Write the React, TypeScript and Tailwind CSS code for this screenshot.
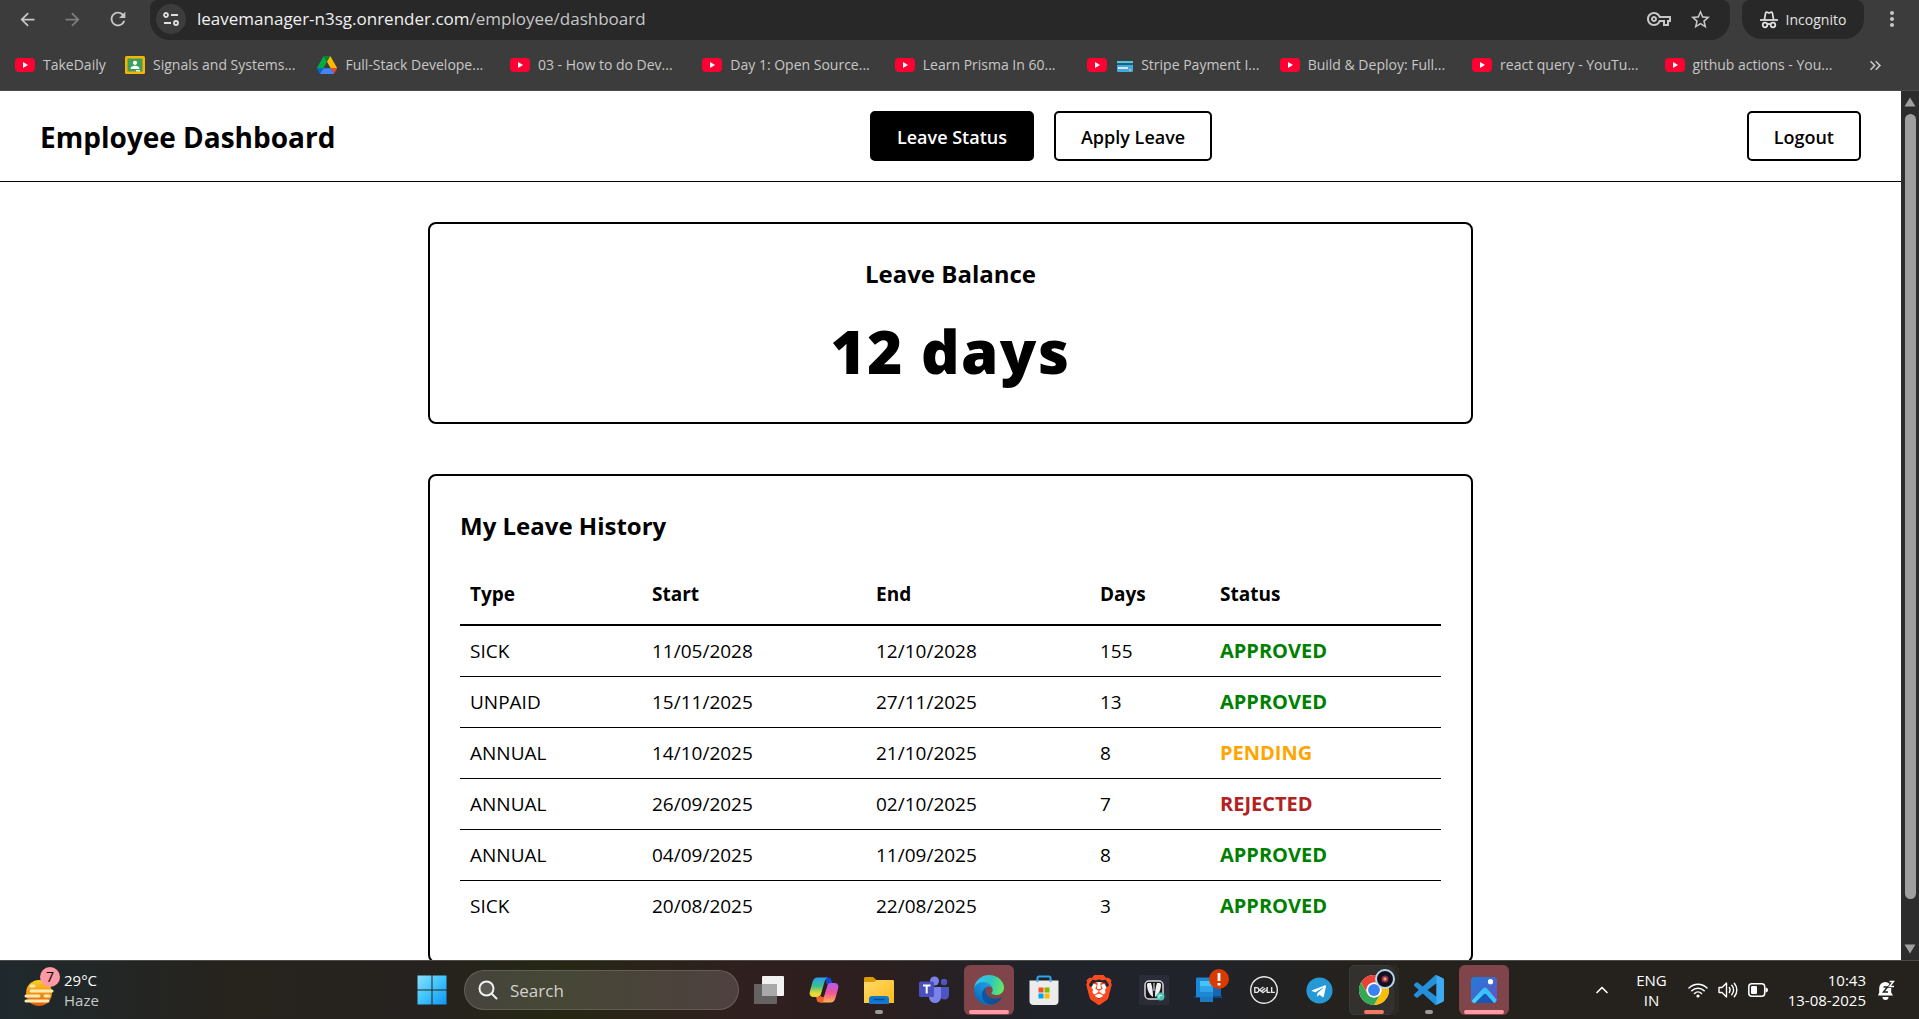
import React from "react";
import {
  MdArrowBack,
  MdArrowForward,
  MdRefresh,
  MdStarBorder,
  MdMoreVert,
  MdOutlineVpnKey,
  MdKeyboardDoubleArrowRight,
} from "react-icons/md";
import { SiBrave, SiDell } from "react-icons/si";
import { FaTelegram } from "react-icons/fa";
import { ChevronUp } from "lucide-react";

/* ---------- browser chrome ---------- */

function YouTubeIcon() {
  return (
    <svg viewBox="0 0 20 18" className="h-[18px] w-5 shrink-0">
      <rect x="0" y="2" width="20" height="14" rx="4" fill="#ff0033" />
      <path d="M8 6v6l5-3z" fill="#fff" />
    </svg>
  );
}

function ClassroomIcon() {
  return (
    <svg viewBox="0 0 20 18" className="h-[18px] w-5 shrink-0">
      <rect width="20" height="18" rx="1.5" fill="#f4b400" />
      <rect x="2.5" y="2.5" width="15" height="13" fill="#3f9c5c" />
      <circle cx="10" cy="6.8" r="2.1" fill="#fff" />
      <path d="M5.5 13c0-2.4 2.5-3.2 4.5-3.2s4.5.8 4.5 3.2z" fill="#fff" />
      <rect x="11" y="14" width="4" height="1.5" fill="#e8f0e9" />
    </svg>
  );
}

function DriveIcon() {
  return (
    <svg viewBox="0 0 87.3 78" className="h-[18px] w-5 shrink-0">
      <path d="m6.6 66.85 3.85 6.65c.8 1.4 1.95 2.5 3.3 3.3l13.75-23.8h-27.5c0 1.55.4 3.1 1.2 4.5z" fill="#0066da" />
      <path d="m43.65 25-13.75-23.8c-1.35.8-2.5 1.9-3.3 3.3l-25.4 44a9.06 9.06 0 0 0-1.2 4.5h27.5z" fill="#00ac47" />
      <path d="m73.55 76.8c1.35-.8 2.5-1.9 3.3-3.3l1.6-2.75 7.65-13.25c.8-1.4 1.2-2.95 1.2-4.5h-27.5l5.85 11.5z" fill="#ea4335" />
      <path d="m43.65 25 13.75-23.8c-1.35-.8-2.9-1.2-4.5-1.2h-18.5c-1.6 0-3.15.45-4.5 1.2z" fill="#00832d" />
      <path d="m59.8 53h-32.3l-13.75 23.8c1.35.8 2.9 1.2 4.5 1.2h50.8c1.6 0 3.15-.45 4.5-1.2z" fill="#4285f4" />
      <path d="m73.4 26.5-12.7-22c-.8-1.4-1.95-2.5-3.3-3.3l-13.75 23.8 16.15 28h27.45c0-1.55-.4-3.1-1.2-4.5z" fill="#ffba00" />
    </svg>
  );
}

function CardIcon() {
  return (
    <svg viewBox="0 0 16 12" className="mr-2 inline h-3 w-4 align-middle">
      <rect y="1" width="16" height="11" rx="1" fill="#3fa9e0" />
      <rect y="1" width="16" height="2" fill="#58c4d8" />
      <rect y="3" width="16" height="2" fill="#1d5f7d" />
      <rect x="1" y="7" width="10" height="2" fill="#d9e6ec" />
      <circle cx="13" cy="10" r="1" fill="#f2c14e" />
    </svg>
  );
}

function IncognitoIcon() {
  return (
    <svg viewBox="0 0 18 18" className="h-[18px] w-[18px]" fill="none" stroke="#e3e3e3" strokeWidth="1.7">
      <path d="M4.4 8.6 5.6 2.2c.2-.9.9-1.2 1.7-.9l1 .4c.5.2.9.2 1.4 0l1-.4c.8-.3 1.5 0 1.7.9l1.2 6.4" />
      <path d="M0 9h18" />
      <circle cx="5" cy="14" r="2.3" />
      <circle cx="13" cy="14" r="2.3" />
      <path d="M7.3 13.6c1-.8 2.4-.8 3.4 0" />
    </svg>
  );
}

function TuneIcon() {
  return (
    <svg viewBox="0 0 16 16" className="h-4 w-4" fill="none" stroke="#dedede" strokeWidth="1.8">
      <circle cx="3" cy="4" r="2" />
      <path d="M8 4h7M1 12h7" />
      <circle cx="13" cy="12" r="2" />
    </svg>
  );
}

const bookmarks: { label: string; icon: React.ReactNode; card?: boolean }[] = [
  { label: "Signals and Systems...", icon: <ClassroomIcon /> },
  { label: "Full-Stack Develope...", icon: <DriveIcon /> },
  { label: "03 - How to do Dev...", icon: <YouTubeIcon /> },
  { label: "Day 1: Open Source...", icon: <YouTubeIcon /> },
  { label: "Learn Prisma In 60...", icon: <YouTubeIcon /> },
  { label: "Stripe Payment I...", icon: <YouTubeIcon />, card: true },
  { label: "Build & Deploy: Full...", icon: <YouTubeIcon /> },
  { label: "react query - YouTu...", icon: <YouTubeIcon /> },
  { label: "github actions - You...", icon: <YouTubeIcon /> },
];

function BrowserBar() {
  return (
    <div className="shrink-0 border-b border-[#4a4a4a] bg-[#3c3c3c] text-[#c7c7c7]">
      <div className="flex h-10 items-start">
        <div className="flex h-[38px] w-[150px] shrink-0 items-center gap-6 pl-[17px]">
          <button aria-label="Back"><MdArrowBack size={21} /></button>
          <button aria-label="Forward" className="text-[#7d7d7d]"><MdArrowForward size={21} /></button>
          <button aria-label="Reload"><MdRefresh size={22} /></button>
        </div>
        <div className="flex h-10 min-w-0 flex-1 items-center rounded-b-[20px] rounded-tl-lg rounded-tr-lg bg-[#282828] pb-0.5 pl-1.5 pr-[18px]">
          <button aria-label="Site information" className="flex size-[30px] items-center justify-center rounded-full bg-[#3c3c3c]">
            <TuneIcon />
          </button>
          <div role="textbox" aria-label="Address" tabIndex={0} className="ml-[11px] flex-1 whitespace-nowrap text-[17px] text-[#c7c7c7]">
            <span className="text-[#f0f0f0]">leavemanager-n3sg.onrender.com</span>/employee/dashboard
          </div>
          <button aria-label="Passwords" className="mr-[18px]"><MdOutlineVpnKey size={24} /></button>
          <button aria-label="Bookmark this tab"><MdStarBorder size={23} /></button>
        </div>
        <button className="ml-3 flex h-[39px] w-[122px] items-center justify-center gap-2 rounded-b-[20px] rounded-t-lg bg-[#282828] text-sm text-[#e3e3e3]">
          <IncognitoIcon />
          Incognito
        </button>
        <button aria-label="Menu" className="ml-4 mr-[15px] flex h-[38px] items-center">
          <MdMoreVert size={24} />
        </button>
      </div>
      <nav className="flex h-[50px] items-center whitespace-nowrap pl-[15px] text-sm">
        <a href="#" className="flex w-[110px] shrink-0 items-center gap-2"><YouTubeIcon />TakeDaily</a>
        {bookmarks.map((b) => (
          <a key={b.label} href="#" className="flex min-w-0 flex-1 items-center gap-2">
            {b.icon}
            <span className={b.card ? "pl-0.5" : ""}>{b.card && <CardIcon />}{b.label}</span>
          </a>
        ))}
        <button aria-label="More bookmarks" className="w-[62px] shrink-0 pl-[9px]">
          <MdKeyboardDoubleArrowRight size={19} />
        </button>
      </nav>
    </div>
  );
}

/* ---------- page ---------- */

type Status = "APPROVED" | "PENDING" | "REJECTED";

const statusColor: Record<Status, string> = {
  APPROVED: "text-[#008000]",
  PENDING: "text-[#ffa500]",
  REJECTED: "text-[#b22222]",
};

const leaves: { type: string; start: string; end: string; days: number; status: Status }[] = [
  { type: "SICK", start: "11/05/2028", end: "12/10/2028", days: 155, status: "APPROVED" },
  { type: "UNPAID", start: "15/11/2025", end: "27/11/2025", days: 13, status: "APPROVED" },
  { type: "ANNUAL", start: "14/10/2025", end: "21/10/2025", days: 8, status: "PENDING" },
  { type: "ANNUAL", start: "26/09/2025", end: "02/10/2025", days: 7, status: "REJECTED" },
  { type: "ANNUAL", start: "04/09/2025", end: "11/09/2025", days: 8, status: "APPROVED" },
  { type: "SICK", start: "20/08/2025", end: "22/08/2025", days: 3, status: "APPROVED" },
];

const navButton = "h-[50px] rounded-[5px] border-2 border-black px-[25px] pt-0.5 text-lg font-semibold";

function Page() {
  return (
    <div className="min-w-0 flex-1 overflow-hidden bg-white text-black">
      <header className="flex items-center justify-between border-b border-black px-10 py-5">
        <h1 className="pt-0.5 text-[28px] leading-10 font-bold">Employee Dashboard</h1>
        <nav className="flex gap-5">
          <button className={`${navButton} bg-black text-white`}>Leave Status</button>
          <button className={navButton}>Apply Leave</button>
        </nav>
        <button className={navButton}>Logout</button>
      </header>
      <main className="mx-auto flex w-full max-w-[1045px] flex-col gap-[50px] pt-10">
        <section className="rounded-lg border-2 border-black px-[30px] pt-[34px] pb-[30px] text-center">
          <h2 className="text-2xl leading-8 font-bold">Leave Balance</h2>
          <p className="mt-5 text-[60px] leading-[82px] font-extrabold tracking-wide">12 days</p>
        </section>
        <section className="rounded-lg border-2 border-black p-[30px]">
          <h2 className="mt-1 text-2xl leading-8 font-bold">My Leave History</h2>
          <table className="mt-[23px] w-full table-fixed border-collapse text-left text-[19px] leading-[26px]">
            <colgroup>
              <col className="w-[182px]" />
              <col className="w-[224px]" />
              <col className="w-[224px]" />
              <col className="w-[120px]" />
              <col />
            </colgroup>
            <thead>
              <tr className="border-b-2 border-black">
                {["Type", "Start", "End", "Days", "Status"].map((h) => (
                  <th key={h} scope="col" className="px-2.5 pt-4 pb-[17px] font-bold">{h}</th>
                ))}
              </tr>
            </thead>
            <tbody>
              {leaves.map((l) => (
                <tr key={l.start} className="border-b border-black last:border-b-0">
                  <td className="px-2.5 py-3">{l.type}</td>
                  <td className="px-2.5 py-3">{l.start}</td>
                  <td className="px-2.5 py-3">{l.end}</td>
                  <td className="px-2.5 py-3">{l.days}</td>
                  <td className={`px-2.5 py-3 text-xl leading-[26px] font-bold ${statusColor[l.status]}`}>{l.status}</td>
                </tr>
              ))}
            </tbody>
          </table>
        </section>
      </main>
    </div>
  );
}

function ScrollTrack() {
  return (
    <div aria-hidden="true" className="flex w-[18px] shrink-0 flex-col items-center bg-[#2c2c2c] py-[6px]">
      <svg viewBox="0 0 12 10" className="h-[10px] w-3"><path d="M6 .5 11.5 9.5H.5z" fill="#9f9f9f" /></svg>
      <div className="mt-[7px] mb-[45px] w-[11px] flex-1 rounded-full bg-[#9f9f9f]" />
      <svg viewBox="0 0 12 10" className="h-[10px] w-3"><path d="M6 9.5.5.5h11z" fill="#9f9f9f" /></svg>
    </div>
  );
}

/* ---------- taskbar ---------- */

function WeatherIcon() {
  return (
    <svg viewBox="0 0 36 36" className="h-9 w-9">
      <defs>
        <linearGradient id="sun" x1="0" y1="0" x2="0" y2="1">
          <stop offset="0" stopColor="#ffd21f" />
          <stop offset="1" stopColor="#e0590b" />
        </linearGradient>
      </defs>
      <circle cx="15" cy="21" r="13" fill="url(#sun)" />
      <g stroke="#ffe9b0" strokeWidth="3" strokeLinecap="round">
        <path d="M7 14h3M7 19h21M2 24h13M21 24h4M2 29h22" />
      </g>
    </svg>
  );
}

function WindowsIcon() {
  return (
    <svg viewBox="0 0 30 30" className="size-[30px]">
      <defs>
        <linearGradient id="win" x1="0" y1="0" x2="30" y2="30" gradientUnits="userSpaceOnUse">
          <stop offset="0" stopColor="#8be1ff" />
          <stop offset=".5" stopColor="#3fc3fb" />
          <stop offset="1" stopColor="#0f90fb" />
        </linearGradient>
      </defs>
      <path d="M.5.5h14v14H.5zM15.500.5h14v14h-14zM.5 15.500h14v14H.5zM15.500 15.500h14v14h-14z" fill="url(#win)" />
    </svg>
  );
}

function TaskViewIcon() {
  return (
    <svg viewBox="0 0 30 28" className="h-7 w-[30px]">
      <rect x="8" y="0" width="22" height="20" rx="1" fill="#f2f2f2" />
      <rect x="0" y="8" width="23" height="20" rx="1" fill="#6f6f6f" fillOpacity=".85" />
      <rect x="8" y="8" width="15" height="12" fill="#a9a9a9" />
    </svg>
  );
}

function CopilotIcon() {
  return (
    <svg viewBox="0 0 30 28" className="h-7 w-[30px]">
      <defs>
        <linearGradient id="cpl" x1="0" y1="0" x2="0" y2="1">
          <stop offset="0" stopColor="#2a9df0" />
          <stop offset=".45" stopColor="#3bc08e" />
          <stop offset=".8" stopColor="#e6d836" />
        </linearGradient>
        <linearGradient id="cpr" x1="0" y1="0" x2="0" y2="1">
          <stop offset="0" stopColor="#b05cf0" />
          <stop offset=".5" stopColor="#f0539a" />
          <stop offset="1" stopColor="#ffb24d" />
        </linearGradient>
      </defs>
      <path d="M16 1.500h3c2.200 0 3 1 3.600 3l1 3.500h-6z" fill="#1746c8" />
      <path d="M8.500 1.500h10c-2 1-2.600 3-3.200 5L12 18c-.6 2-1.700 3-3.800 3H5c-4 0-5-2.500-4-6l2.500-9C4.400 3 6 1.500 8.500 1.500z" fill="url(#cpl)" />
      <path d="M21.500 26.500h-10c2-1 2.600-3 3.200-5L18 10c.6-2 1.700-3 3.800-3H25c4 0 5 2.500 4 6l-2.500 9c-.9 3-2.500 4.500-5 4.500z" fill="url(#cpr)" />
      <path d="M14 26.500h-3c-2.200 0-3-1-3.400-3L7.200 21H9c1.700 0 2.700-.8 3.200-2.200L15 21z" fill="#f0622f" />
      <path d="m16.800 9.500-3.400 10" stroke="#2c1f20" strokeWidth="3" strokeLinecap="round" />
    </svg>
  );
}

function ExplorerIcon() {
  return (
    <svg viewBox="0 0 30 28" className="h-7 w-[30px]">
      <defs>
        <linearGradient id="fold" x1="0" y1="0" x2="1" y2="1">
          <stop offset="0" stopColor="#ffd96a" />
          <stop offset="1" stopColor="#fcbc19" />
        </linearGradient>
      </defs>
      <path d="M0 2.500C0 1.500.8 1 1.500 1H9l3.500 3H15v6H0z" fill="#dd9a06" />
      <path d="M0 6h10l3-2h15.500c1 0 1.500.5 1.500 1.500V27H0z" fill="url(#fold)" />
      <path d="M5 28v-5c0-2 1-3 3-3h14c2 0 3 1 3 3v5z" fill="#1277cf" />
      <path d="M9.500 23.500h11" stroke="#0b4c88" strokeWidth="1.500" />
    </svg>
  );
}

function TeamsIcon() {
  return (
    <svg viewBox="0 0 30 28" className="h-7 w-[30px]">
      <circle cx="25" cy="6" r="3.200" fill="#4f55c0" />
      <path d="M21 11h8c.6 0 1 .4 1 1v6.500c0 3-2 5-4.500 5S21 22 21 19z" fill="#4f55c0" />
      <circle cx="15.500" cy="5" r="4.500" fill="#7b83eb" />
      <path d="M10 11h12v9.500c0 4-2.500 6.500-6 6.500s-6-2.500-6-6.500z" fill="#7b83eb" />
      <rect x="0" y="5.500" width="15" height="15.500" rx="1.500" fill="#4a50be" />
      <path d="M4 9.500h7.500M7.700 9.500V17.500" stroke="#fff" strokeWidth="2" />
    </svg>
  );
}

function EdgeIcon() {
  return (
    <svg viewBox="0 0 256 256" className="size-[30px]">
      <defs>
        <linearGradient id="ed1" x1="60" y1="177" x2="240" y2="177" gradientUnits="userSpaceOnUse">
          <stop offset="0" stopColor="#0c59a4" />
          <stop offset="1" stopColor="#114a8b" />
        </linearGradient>
        <linearGradient id="ed2" x1="150" y1="100" x2="40" y2="222" gradientUnits="userSpaceOnUse">
          <stop offset="0" stopColor="#1b9de2" />
          <stop offset=".5" stopColor="#1487d4" />
          <stop offset="1" stopColor="#0b6bbd" />
        </linearGradient>
        <linearGradient id="ed3" x1="20" y1="60" x2="250" y2="120" gradientUnits="userSpaceOnUse">
          <stop offset="0" stopColor="#35c1f1" />
          <stop offset=".5" stopColor="#2fc6c0" />
          <stop offset="1" stopColor="#66eb5a" />
        </linearGradient>
      </defs>
      <path fill="url(#ed1)" d="M231 190.500c-3.400 1.800-6.900 3.400-10.500 4.700a101.200 101.200 0 0 1-36 6.500c-47.400 0-88.700-32.600-88.700-74.400 0-11.400 6.400-21.900 16.400-27.300-42.900 1.800-53.900 46.500-53.900 72.700 0 74 68.200 81.600 82.900 81.600 7.900 0 19.900-2.300 27-4.600l1.300-.4a128.300 128.300 0 0 0 66.600-52.800 4 4 0 0 0-5.100-6z" />
      <path fill="url(#ed2)" d="M105.700 241.400a79.200 79.200 0 0 1-22.700-21.300 80.700 80.700 0 0 1 29.500-120c3.200-1.500 8.500-4.100 15.600-4a32.400 32.400 0 0 1 25.700 13 31.900 31.900 0 0 1 6.300 18.700c0-.2 24.500-79.600-80-79.600-43.900 0-80 41.700-80 78.200a130.200 130.200 0 0 0 12.100 56 128 128 0 0 0 156.400 67 75.500 75.500 0 0 1-62.800-8z" />
      <path fill="url(#ed3)" d="M152.300 148.900c-.9 1-3.400 2.500-3.400 5.600 0 2.600 1.700 5.200 4.800 7.300 14.400 10 41.500 8.700 41.600 8.700a59.600 59.600 0 0 0 30.300-8.400 61.400 61.400 0 0 0 30.400-52.900c.3-22.400-8-37.300-11.300-43.900C223.500 23.900 177.700 0 128 0A128 128 0 0 0 0 126.200c.5-36.500 36.800-66 80-66 3.500 0 23.500.3 42 10.100 16.300 8.600 24.900 18.900 30.800 29.200 6.200 10.700 7.300 24.100 7.300 29.500 0 5.300-2.700 13.300-7.800 19.900z" />
    </svg>
  );
}

function StoreIcon() {
  return (
    <svg viewBox="0 0 30 30" className="size-[30px]">
      <path d="M8.500 7V3c0-1 .5-1.500 1.500-1.500h10c1 0 1.500.5 1.500 1.500v4" fill="none" stroke="#2aa5ea" strokeWidth="2" />
      <path d="M.5 5.500h29V26c0 2.500-1.500 4-4 4h-21c-2.500 0-4-1.500-4-4z" fill="#ececec" />
      <path d="M7.500 5.500h2v1.500h-2zM20.500 5.500h2v1.500h-2z" fill="#2aa5ea" />
      <path d="M9.500 12.500h5v5h-5z" fill="#f25022" />
      <path d="M15.500 12.500h5v5h-5z" fill="#7fba00" />
      <path d="M9.500 18.500h5v5h-5z" fill="#00a4ef" />
      <path d="M15.500 18.500h5v5h-5z" fill="#ffb900" />
    </svg>
  );
}

function BraveIcon() {
  return (
    <span className="relative flex size-[30px] items-center justify-center">
      <span className="absolute size-4 rounded-full bg-white" />
      <SiBrave size={30} color="#fb4a1f" className="relative" />
    </span>
  );
}

function SaavnIcon() {
  return (
    <svg viewBox="0 0 30 30" className="size-[30px]">
      <rect width="30" height="30" fill="#2a2d38" />
      <rect x="6" y="6" width="18" height="18" rx="4" fill="#15171d" stroke="#d7d7d7" strokeWidth="1.500" />
      <path d="M8 9.500C8 8.700 8.700 8 9.500 8H12c1.500 4 2 9 2 14-3.500-2-6-7-6-12.500zM22 9.500c0-.8-.7-1.500-1.500-1.500H18c-1.500 4-2 9-2 14 3.500-2 6-7 6-12.500z" fill="#f2f2f2" />
      <path d="M15 8v8" stroke="#f2f2f2" strokeWidth="1" />
      <circle cx="21.500" cy="21.500" r="4" fill="#4ec2b0" />
      <path d="M20 23.500v-3h3" stroke="#d8fff6" fill="none" />
    </svg>
  );
}

function PhoneLinkIcon() {
  return (
    <svg viewBox="0 0 30 30" className="size-[30px]">
      <path d="M3 4h24v18H3z" fill="#1467b3" />
      <path d="M0 21h28v2H1z" fill="#0c4884" />
      <path d="M2 4c0-1 .5-1.500 1.500-1.500H17V22H2z" fill="#1c86d8" />
      <path d="M6 6h13v21H6z" fill="#1d78c6" />
      <path d="M6 6h13v5H6z" fill="#49c2f5" />
      <path d="M6 11h13v6H6z" fill="#2fa4e8" />
      <path d="M6 17h13v5H6z" fill="#1f86d2" />
    </svg>
  );
}

function ChromeIcon() {
  return (
    <svg viewBox="0 0 48 48" className="size-[30px]">
      <circle cx="24" cy="24" r="24" fill="#fff" />
      <path d="M24 12h20.800A24 24 0 0 0 3.200 12l10.400 18A12 12 0 0 1 24 12z" fill="#ea4335" />
      <path d="M34.400 30 24 48a24 24 0 0 0 20.800-36H24a12 12 0 0 1 10.400 18z" fill="#fbbc04" />
      <path d="M13.600 30 3.200 12A24 24 0 0 0 24 48l10.400-18a12 12 0 0 1-20.800 0z" fill="#34a853" />
      <circle cx="24" cy="24" r="12" fill="#fff" />
      <circle cx="24" cy="24" r="9.500" fill="#3b82f1" />
    </svg>
  );
}

function ProfileBadge() {
  return (
    <svg viewBox="0 0 20 20" className="absolute top-1 right-1 size-5">
      <circle cx="10" cy="10" r="9" fill="#14101f" stroke="#b9d9ee" strokeWidth="2" />
      <circle cx="10" cy="10" r="3.500" fill="#8e2f55" />
      <circle cx="10" cy="10" r="1.700" fill="#ff9b4a" />
    </svg>
  );
}

function AlertBadge() {
  return (
    <svg viewBox="0 0 20 20" className="absolute top-1 right-[5px] size-5">
      <circle cx="10" cy="10" r="10" fill="#d83b01" />
      <path d="M10 4v8M10 14v2.500" stroke="#fff" strokeWidth="2.800" />
    </svg>
  );
}

function CodeIcon() {
  return (
    <svg viewBox="0 0 24 24" className="size-[30px]">
      <path fill="#2490dc" d="M23.150 2.587L18.210.210a1.494 1.494 0 0 0-1.705.290l-9.460 8.630-4.120-3.128a.999.999 0 0 0-1.276.057L.327 7.261A1 1 0 0 0 .326 8.740L3.899 12 .326 15.260a1 1 0 0 0 .001 1.479L1.650 17.940a.999.999 0 0 0 1.276.057l4.120-3.128 9.460 8.630a1.492 1.492 0 0 0 1.704.290l4.942-2.377A1.500 1.500 0 0 0 24 20.060V3.939a1.500 1.500 0 0 0-.850-1.352zm-5.146 14.861L10.826 12l7.178-5.448v10.896z" />
      <path fill="#3daaf2" d="M18 .150 23.150 2.587A1.500 1.500 0 0 1 24 3.939V20.060a1.500 1.500 0 0 1-.850 1.352L18 23.850z" />
    </svg>
  );
}

function PhotosIcon() {
  return (
    <svg viewBox="0 0 26 26" className="size-[26px]">
      <defs>
        <linearGradient id="ph" x1="0" y1="0" x2="1" y2="1">
          <stop offset="0" stopColor="#1b7fdc" />
          <stop offset="1" stopColor="#6a4fc0" />
        </linearGradient>
        <linearGradient id="ph2" x1="1" y1="0" x2="0" y2="1">
          <stop offset="0" stopColor="#35b4f4" />
          <stop offset="1" stopColor="#45d8ff" />
        </linearGradient>
      </defs>
      <rect width="26" height="26" rx="3.500" fill="url(#ph)" />
      <path d="M1 23.500 12 11.500c1.200-1.200 2.800-1.200 4 0l9.500 11c-.3 2-1.200 3.500-2.500 3.500H3c-1 0-2-1-2-2.500z" fill="url(#ph2)" />
      <path d="M4 26 12.500 17.500c1-.9 2-.9 3 0L23 26z" fill="#1a56b8" />
      <circle cx="19.500" cy="4.700" r="2.600" fill="#fff" />
    </svg>
  );
}

type App = { name: string; icon: React.ReactNode; mark?: "dot" | "pink" | "orange"; active?: boolean; extra?: React.ReactNode; stacked?: boolean };

const apps: App[] = [
  { name: "Task view", icon: <TaskViewIcon /> },
  { name: "Copilot", icon: <CopilotIcon /> },
  { name: "File Explorer", icon: <ExplorerIcon />, mark: "dot" },
  { name: "Teams", icon: <TeamsIcon /> },
  { name: "Edge", icon: <EdgeIcon />, mark: "pink", active: true },
  { name: "Store", icon: <StoreIcon /> },
  { name: "Brave", icon: <BraveIcon /> },
  { name: "JioSaavn", icon: <SaavnIcon /> },
  { name: "Phone Link", icon: <PhoneLinkIcon />, extra: <AlertBadge /> },
  { name: "Dell", icon: <SiDell size={28} color="#e9e9e9" /> },
  { name: "Telegram", icon: <span className="rounded-full bg-[radial-gradient(white_60%,transparent_61%)]"><FaTelegram size={27} color="#2698d6" /></span> },
  { name: "Chrome", icon: <ChromeIcon />, mark: "orange", stacked: true, extra: <ProfileBadge /> },
  { name: "Visual Studio Code", icon: <CodeIcon />, mark: "dot" },
  { name: "Photos", icon: <PhotosIcon />, mark: "pink", active: true },
];

const markClass = {
  dot: "w-2 bg-[#9a9a9a]",
  pink: "w-10 bg-[#ff9aa5]",
  orange: "w-5 bg-[#f07a62]",
};

function AppButton({ app }: { app: App }) {
  const tile = app.active
    ? "bg-[#7f454b]"
    : app.stacked
      ? "bg-[#33312d] shadow-[inset_-5px_0_0_#2b2925,inset_0_0_0_1px_#3b3935]"
      : "";
  return (
    <button aria-label={app.name} className={`relative flex size-[50px] shrink-0 items-center justify-center rounded-md ${tile}`}>
      {app.icon}
      {app.extra}
      {app.mark && <span className={`absolute bottom-px h-1 rounded-full ${markClass[app.mark]}`} />}
    </button>
  );
}

function WifiIcon() {
  return (
    <svg viewBox="0 0 20 16" className="h-4 w-5" fill="none" stroke="#fff" strokeWidth="1.500" strokeLinecap="round">
      <path d="M1 6a12.700 12.700 0 0 1 18 0M3.800 8.800a8.800 8.800 0 0 1 12.400 0M6.500 11.500a5 5 0 0 1 7 0" />
      <circle cx="10" cy="14" r="1.600" fill="#fff" stroke="none" />
    </svg>
  );
}

function SoundIcon() {
  return (
    <svg viewBox="0 0 20 18" className="h-[18px] w-5" fill="none" stroke="#fff" strokeWidth="1.400" strokeLinecap="round" strokeLinejoin="round">
      <path d="M1 6.500h3L8.500 2v14L4 11.500H1z" />
      <path d="M11.300 6.500c1 1.500 1 3.500 0 5M13.800 4.300c2.200 2.800 2.200 6.600 0 9.400M16.300 2.200c3.400 4 3.400 9.600 0 13.600" />
    </svg>
  );
}

function BatteryIcon() {
  return (
    <svg viewBox="0 0 20 14" className="h-[14px] w-5">
      <rect x=".8" y=".8" width="15.900" height="12.400" rx="3" fill="none" stroke="#fff" strokeWidth="1.500" />
      <rect x="3" y="3" width="6" height="8" rx="1" fill="#fff" />
      <path d="M17.500 4.500c1.500.2 2.500 1 2.500 2.500s-1 2.300-2.500 2.500z" fill="#fff" />
    </svg>
  );
}

function BellIcon() {
  return (
    <svg viewBox="0 0 18 20" className="h-5 w-[18px]">
      <path d="M1 15.500 2.200 12.500V8a6 6 0 0 1 12 0v4.500l1.800 3z" fill="#fff" />
      <path d="M5.500 17h6a3 3 0 0 1-6 0z" fill="#fff" />
      <path d="M6.500 7h4l-4 5h4.500" fill="none" stroke="#25221f" strokeWidth="1.500" />
      <path d="M12.500 1.500h4l-4 5h4.500" fill="none" stroke="#25221f" strokeWidth="3" />
      <path d="M12.500 1.500h4l-4 5h4.500" fill="none" stroke="#fff" strokeWidth="1.400" />
    </svg>
  );
}

function Taskbar() {
  return (
    <footer className="flex h-[59px] shrink-0 items-center justify-between border-t border-[#4b4b49] bg-[linear-gradient(90deg,#1f292d_0%,#27231d_12%,#26221f_22%,#262713_29%,#301f1f_39%,#2c1f20_46%,#20232a_54%,#20232a_62%,#25221e_70%,#25221e_100%)] text-white">
      <div className="flex w-[407px] items-center gap-1 pl-6">
        <div className="relative">
          <WeatherIcon />
          <span className="absolute -top-[5px] right-0 flex size-5 items-center justify-center rounded-full bg-[#ff99a4] text-sm leading-none text-black">7</span>
        </div>
        <div className="text-[15px] leading-5">
          <div>29°C</div>
          <div className="text-[#c9c9c9]">Haze</div>
        </div>
      </div>
      <div className="flex items-center gap-[5px]">
        <button aria-label="Start" className="flex size-[50px] items-center justify-center"><WindowsIcon /></button>
        <div className="ml-0.5 flex h-10 w-[275px] items-center gap-3 rounded-full border border-white/15 bg-white/15 pl-[13px]">
          <svg viewBox="0 0 20 20" className="size-5 shrink-0" fill="none" stroke="#f0f0f0" strokeWidth="2" strokeLinecap="round">
            <circle cx="8.500" cy="8.500" r="7" fill="#77777766" />
            <path d="m13.500 13.500 5 5" />
          </svg>
          <input aria-label="Search" placeholder="Search" className="w-full bg-transparent pt-0.5 text-[17px] outline-none placeholder:text-[#d2d2cc]" />
        </div>
        {apps.map((a) => (
          <AppButton key={a.name} app={a} />
        ))}
      </div>
      <div className="flex w-[410px] items-center justify-end pr-6 text-[15px] leading-5">
        <button aria-label="Show hidden icons" className="mr-6"><ChevronUp size={20} /></button>
        <div className="mr-[21px] text-center">
          <div>ENG</div>
          <div>IN</div>
        </div>
        <div className="mr-5 flex items-center gap-2.5">
          <WifiIcon />
          <SoundIcon />
          <BatteryIcon />
        </div>
        <div className="mr-[11px] text-right">
          <div>10:43</div>
          <div>13-08-2025</div>
        </div>
        <BellIcon />
      </div>
    </footer>
  );
}

export default function App() {
  return (
    <div className="flex h-screen flex-col overflow-hidden bg-white font-['Open_Sans','Noto_Sans',sans-serif]">
      <BrowserBar />
      <div className="flex min-h-0 flex-1">
        <Page />
        <ScrollTrack />
      </div>
      <Taskbar />
    </div>
  );
}
